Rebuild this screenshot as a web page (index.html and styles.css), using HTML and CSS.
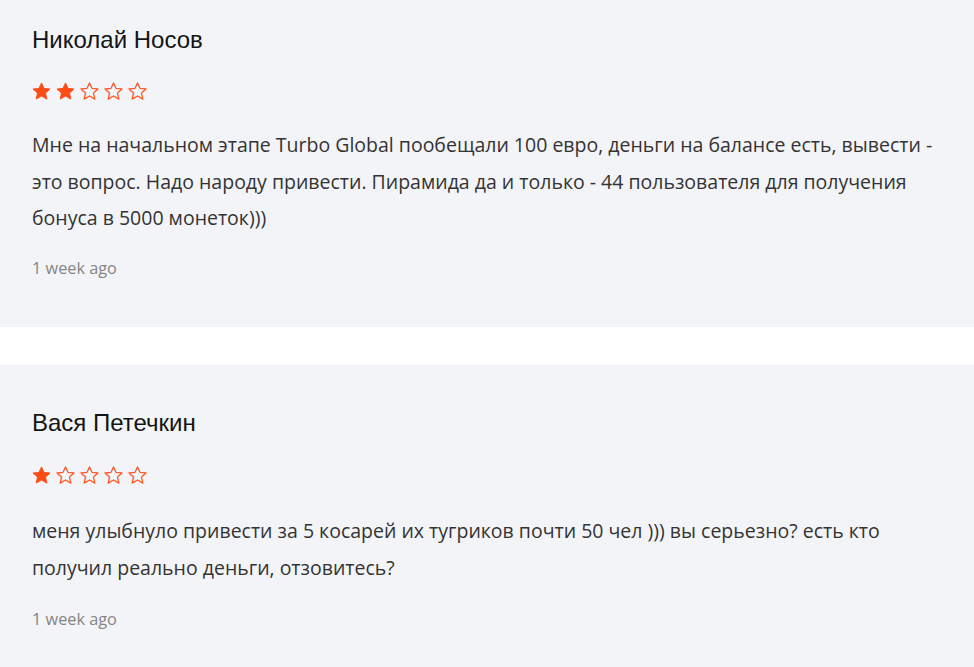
FILE: index.html
```html
<!DOCTYPE html>
<html lang="ru">
<head>
<meta charset="utf-8">
<title>Reviews</title>
<link rel="stylesheet" href="styles.css">
</head>
<body>
<div class="reviews">
  <div class="review review-first">
    <div class="name">Николай Носов</div>
    <div class="stars">
      <svg class="star" viewBox="0 0 20 20"><polygon class="full" points="10,1 12.7,6.8 19,7.4 14.2,11.6 15.6,18 10,14.7 4.4,18 5.8,11.6 1,7.4 7.3,6.8"/></svg>
      <svg class="star" viewBox="0 0 20 20"><polygon class="full" points="10,1 12.7,6.8 19,7.4 14.2,11.6 15.6,18 10,14.7 4.4,18 5.8,11.6 1,7.4 7.3,6.8"/></svg>
      <svg class="star" viewBox="0 0 20 20"><polygon class="empty" points="10,1 12.7,6.8 19,7.4 14.2,11.6 15.6,18 10,14.7 4.4,18 5.8,11.6 1,7.4 7.3,6.8"/></svg>
      <svg class="star" viewBox="0 0 20 20"><polygon class="empty" points="10,1 12.7,6.8 19,7.4 14.2,11.6 15.6,18 10,14.7 4.4,18 5.8,11.6 1,7.4 7.3,6.8"/></svg>
      <svg class="star" viewBox="0 0 20 20"><polygon class="empty" points="10,1 12.7,6.8 19,7.4 14.2,11.6 15.6,18 10,14.7 4.4,18 5.8,11.6 1,7.4 7.3,6.8"/></svg>
    </div>
    <p class="text">Мне на начальном этапе Turbo Global пообещали 100 евро, деньги на балансе есть, вывести - это вопрос. Надо народу привести. Пирамида да и только - 44 пользователя для получения бонуса в 5000 монеток)))</p>
    <div class="date">1 week ago</div>
  </div>
  <div class="review">
    <div class="name">Вася Петечкин</div>
    <div class="stars">
      <svg class="star" viewBox="0 0 20 20"><polygon class="full" points="10,1 12.7,6.8 19,7.4 14.2,11.6 15.6,18 10,14.7 4.4,18 5.8,11.6 1,7.4 7.3,6.8"/></svg>
      <svg class="star" viewBox="0 0 20 20"><polygon class="empty" points="10,1 12.7,6.8 19,7.4 14.2,11.6 15.6,18 10,14.7 4.4,18 5.8,11.6 1,7.4 7.3,6.8"/></svg>
      <svg class="star" viewBox="0 0 20 20"><polygon class="empty" points="10,1 12.7,6.8 19,7.4 14.2,11.6 15.6,18 10,14.7 4.4,18 5.8,11.6 1,7.4 7.3,6.8"/></svg>
      <svg class="star" viewBox="0 0 20 20"><polygon class="empty" points="10,1 12.7,6.8 19,7.4 14.2,11.6 15.6,18 10,14.7 4.4,18 5.8,11.6 1,7.4 7.3,6.8"/></svg>
      <svg class="star" viewBox="0 0 20 20"><polygon class="empty" points="10,1 12.7,6.8 19,7.4 14.2,11.6 15.6,18 10,14.7 4.4,18 5.8,11.6 1,7.4 7.3,6.8"/></svg>
    </div>
    <p class="text">меня улыбнуло привести за 5 косарей их тугриков почти 50 чел ))) вы серьезно? есть кто получил реально деньги, отзовитесь?</p>
    <div class="date">1 week ago</div>
  </div>
</div>
</body>
</html>
```

FILE: styles.css
```css
html, body {
  margin: 0;
  padding: 0;
  background: #ffffff;
}

.reviews {
  display: flex;
  flex-direction: column;
  gap: 38px;
}

.review {
  background: #f3f4f8;
  padding: 45px 32px 48px 32px;
  display: flex;
  flex-direction: column;
}

.review-first {
  padding-top: 27px;
  padding-bottom: 49px;
}

.name {
  font-family: "Liberation Sans", Arial, sans-serif;
  font-size: 24px;
  line-height: 26px;
  color: #141414;
}

.stars {
  display: flex;
  gap: 5px;
  margin-top: 30px;
  height: 19px;
}

.review-first .stars {
  margin-top: 29px;
}

.star {
  width: 19px;
  height: 19px;
  display: block;
}

.full {
  fill: #ff4b16;
  stroke: #ff4b16;
  stroke-width: 1;
  stroke-linejoin: round;
}

.empty {
  fill: none;
  stroke: #ff5a2a;
  stroke-width: 1.4;
  stroke-linejoin: round;
}

.text {
  margin: 27px 0 0 0;
  font-family: "Open Sans", "Noto Sans", sans-serif;
  font-size: 19.5px;
  line-height: 37px;
  color: #333333;
}

.review-first .text {
  margin-top: 26px;
  line-height: 36.7px;
}

.date {
  margin-top: 23px;
  font-family: "Open Sans", "Noto Sans", sans-serif;
  font-size: 16.3px;
  line-height: 20px;
  color: #858585;
}

.review-first .date {
  margin-top: 21px;
}
```
